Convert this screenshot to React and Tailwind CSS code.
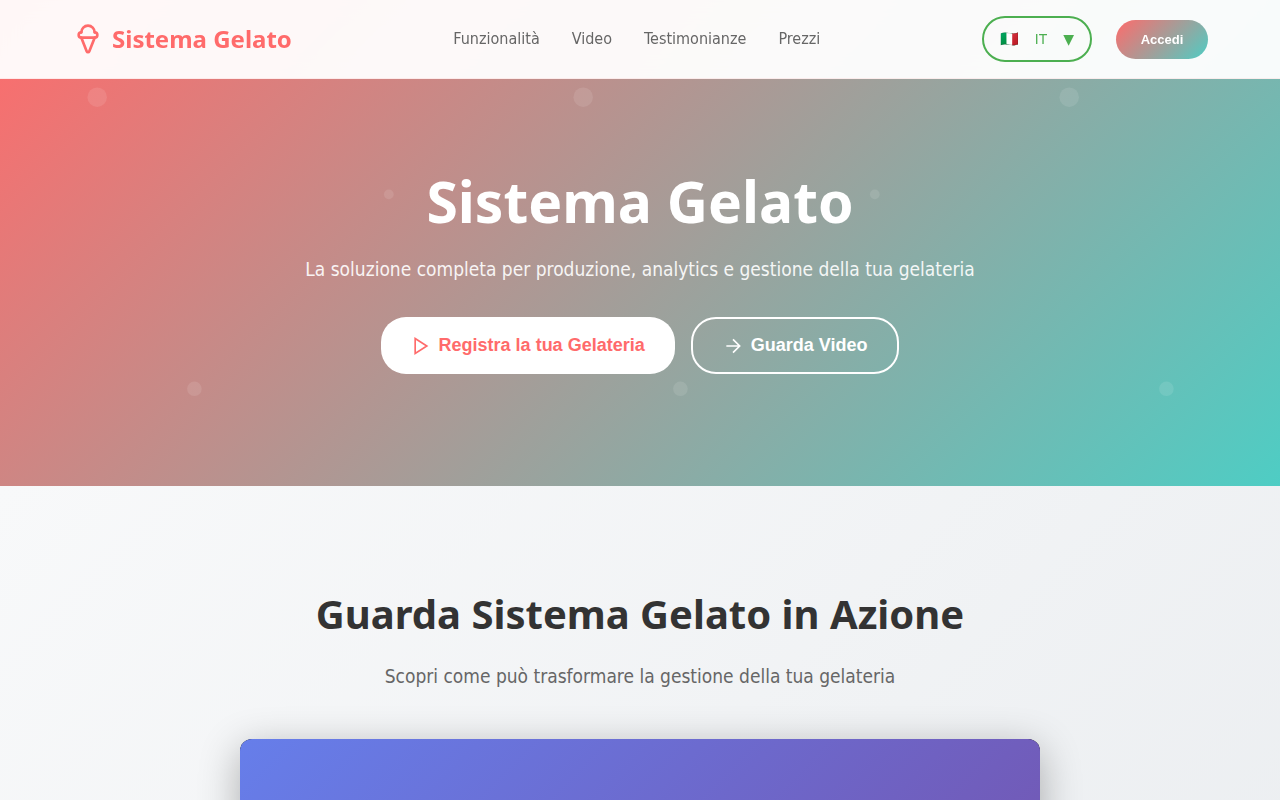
import React from "react";
import { IceCreamCone } from "lucide-react";

const navLinks = [
  { label: "Funzionalità", href: "#features" },
  { label: "Video", href: "#video" },
  { label: "Testimonianze", href: "#testimonials" },
  { label: "Prezzi", href: "#pricing" },
];

function Header() {
  return (
    <header className="fixed inset-x-0 top-0 z-10 border-b border-[#ff6b6b]/10 bg-white/95 backdrop-blur-[10px]">
      <div className="mx-auto flex max-w-[1200px] items-center justify-between px-8 py-4">
        <a
          href="#home"
          className="flex items-center gap-2 font-['Noto_Sans',sans-serif] text-2xl font-bold text-[#ff6b6b]"
        >
          <IceCreamCone size={32} />
          <span>Sistema Gelato</span>
        </a>
        <nav className="flex gap-8">
          {navLinks.map((link) => (
            <a key={link.href} href={link.href} className="leading-[26px] text-[#666]">
              {link.label}
            </a>
          ))}
        </nav>
        <div className="flex items-center gap-6">
          <button
            type="button"
            className="flex h-[46px] items-center gap-4 rounded-[25px] border-2 border-[#4caf50] px-4 font-['Liberation_Sans',sans-serif] text-sm text-[#4caf50]"
          >
            <span className="text-[15px]">🇮🇹</span>
            <span>IT</span>
            <span className="font-['DejaVu_Sans',sans-serif]">▼</span>
          </button>
          <button
            type="button"
            className="min-w-[92px] rounded-[25px] bg-linear-[135deg,#ff6b6b,#4ecdc4] px-6 py-3 font-['Liberation_Sans',sans-serif] text-[13px] leading-[15px] font-bold text-white"
          >
            Accedi
          </button>
        </div>
      </div>
    </header>
  );
}

function Dots() {
  return (
    <svg
      viewBox="0 0 100 100"
      className="aspect-square h-full shrink-0 fill-white/10"
      aria-hidden="true"
    >
      <circle cx="20" cy="20" r="2" />
      <circle cx="80" cy="40" r="1" />
      <circle cx="40" cy="80" r="1.5" />
    </svg>
  );
}

function Hero() {
  const buttonClasses =
    "flex items-center gap-2 rounded-[25px] px-[30px] py-4 font-['Liberation_Sans',sans-serif] text-lg leading-[21px] font-bold";

  return (
    <section
      id="home"
      className="relative bg-linear-[135deg,#ff6b6b,#4ecdc4] px-8 pt-[168px] pb-28 text-center text-white"
    >
      <div className="absolute inset-0 flex overflow-hidden">
        <Dots />
        <Dots />
        <Dots />
      </div>
      <div className="relative">
        <h1 className="mb-[18px] font-['Noto_Sans',sans-serif] text-[57px] leading-[66px] font-bold">
          Sistema Gelato
        </h1>
        <p className="mb-[31px] text-[19px] leading-[34px] opacity-90">
          La soluzione completa per produzione, analytics e gestione della tua
          gelateria
        </p>
        <div className="flex flex-wrap justify-center gap-4">
          <button type="button" className={`${buttonClasses} bg-white text-[#ff6b6b]`}>
            <svg
              width="20"
              height="20"
              viewBox="0 0 24 24"
              fill="none"
              stroke="currentColor"
              strokeWidth="2"
            >
              <polygon points="5 3 19 12 5 21 5 3" />
            </svg>
            Registra la tua Gelateria
          </button>
          <button type="button" className={`${buttonClasses} border-2 border-white`}>
            <svg
              width="20"
              height="20"
              viewBox="0 0 24 24"
              fill="none"
              stroke="currentColor"
              strokeWidth="2"
            >
              <path d="M4 12h16M12 4l8 8-8 8" />
            </svg>
            Guarda Video
          </button>
        </div>
      </div>
    </section>
  );
}

function VideoSection() {
  return (
    <section
      id="video"
      className="bg-linear-[135deg,#f8f9fa,#e9ecef] px-8 py-24 text-center"
    >
      <h2 className="mb-4 font-['Noto_Sans',sans-serif] text-[40px] leading-[64px] font-bold text-[#333]">
        Guarda Sistema Gelato in Azione
      </h2>
      <p className="mb-12 text-[19px] leading-[29px] text-[#666]">
        Scopri come può trasformare la gestione della tua gelateria
      </p>
      <div className="mx-auto aspect-video max-w-[800px] overflow-hidden rounded-xl bg-black shadow-[0_10px_40px_rgba(0,0,0,0.3)]">
        <div className="h-full bg-linear-[135deg,#667eea,#764ba2]" />
      </div>
    </section>
  );
}

function App() {
  return (
    <div className="font-['DejaVu_Sans_Condensed','DejaVu_Sans',sans-serif]">
      <Header />
      <main>
        <Hero />
        <VideoSection />
      </main>
    </div>
  );
}

export default App;
